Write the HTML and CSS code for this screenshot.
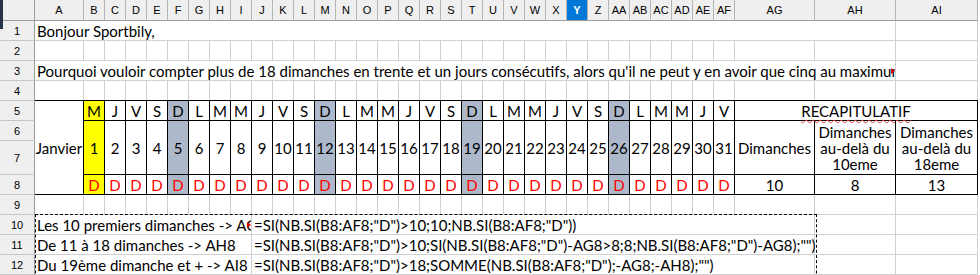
FILE: index.html
```html
<!DOCTYPE html>
<html lang="fr">
<head>
    <meta charset="UTF-8">
    <title>Dimanches - Janvier</title>
    <link rel="stylesheet" href="styles.css">
</head>
<body>

<div class="sheet">
    <!-- en-tetes de colonnes -->
    <div class="ch corner"></div>
    <div class="ch">A</div><div class="ch">B</div><div class="ch">C</div><div class="ch">D</div><div class="ch">E</div>
    <div class="ch">F</div><div class="ch">G</div><div class="ch">H</div><div class="ch">I</div><div class="ch">J</div>
    <div class="ch">K</div><div class="ch">L</div><div class="ch">M</div><div class="ch">N</div><div class="ch">O</div>
    <div class="ch">P</div><div class="ch">Q</div><div class="ch">R</div><div class="ch">S</div><div class="ch">T</div>
    <div class="ch">U</div><div class="ch">V</div><div class="ch">W</div><div class="ch">X</div><div class="ch sel">Y</div>
    <div class="ch">Z</div><div class="ch">AA</div><div class="ch">AB</div><div class="ch">AC</div><div class="ch">AD</div>
    <div class="ch">AE</div><div class="ch">AF</div><div class="ch">AG</div><div class="ch">AH</div><div class="ch">AI</div>

    <!-- ligne 1 -->
    <div class="rh">1</div>
    <div class="c wide">Bonjour <span class="typo">Sportbily</span>,</div>
    <div class="c"></div>

    <!-- ligne 2 -->
    <div class="rh">2</div>
    <div class="c"></div><div class="c"></div><div class="c"></div><div class="c"></div><div class="c"></div>
    <div class="c"></div><div class="c"></div><div class="c"></div><div class="c"></div><div class="c"></div>
    <div class="c"></div><div class="c"></div><div class="c"></div><div class="c"></div><div class="c"></div>
    <div class="c"></div><div class="c"></div><div class="c"></div><div class="c"></div><div class="c"></div>
    <div class="c"></div><div class="c"></div><div class="c"></div><div class="c"></div><div class="c"></div>
    <div class="c"></div><div class="c"></div><div class="c"></div><div class="c"></div><div class="c"></div>
    <div class="c"></div><div class="c"></div><div class="c"></div><div class="c"></div><div class="c"></div>

    <!-- ligne 3 -->
    <div class="rh">3</div>
    <div class="c wide cut">Pourquoi vouloir compter plus de 18 dimanches en trente et un jours consécutifs, alors qu'il ne peut y en avoir que cinq au maximum</div>
    <div class="c"></div>

    <!-- ligne 4 -->
    <div class="rh">4</div>
    <div class="c"></div><div class="c"></div><div class="c"></div><div class="c"></div><div class="c"></div>
    <div class="c"></div><div class="c"></div><div class="c"></div><div class="c"></div><div class="c"></div>
    <div class="c"></div><div class="c"></div><div class="c"></div><div class="c"></div><div class="c"></div>
    <div class="c"></div><div class="c"></div><div class="c"></div><div class="c"></div><div class="c"></div>
    <div class="c"></div><div class="c"></div><div class="c"></div><div class="c"></div><div class="c"></div>
    <div class="c"></div><div class="c"></div><div class="c"></div><div class="c"></div><div class="c"></div>
    <div class="c"></div><div class="c"></div><div class="c"></div><div class="c"></div><div class="c"></div>

    <!-- lignes 5 a 8 : le calendrier -->
    <div class="rh">5</div>
    <div class="rh">6</div>
    <div class="rh">7</div>
    <div class="rh">8</div>

    <div class="cal">
        <div class="k month">Janvier</div>

        <div class="k yel">M</div><div class="k">J</div><div class="k">V</div><div class="k">S</div><div class="k sun">D</div>
        <div class="k">L</div><div class="k">M</div><div class="k">M</div><div class="k">J</div><div class="k">V</div>
        <div class="k">S</div><div class="k sun">D</div><div class="k">L</div><div class="k">M</div><div class="k">M</div>
        <div class="k">J</div><div class="k">V</div><div class="k">S</div><div class="k sun">D</div><div class="k">L</div>
        <div class="k">M</div><div class="k">M</div><div class="k">J</div><div class="k">V</div><div class="k">S</div>
        <div class="k sun">D</div><div class="k">L</div><div class="k">M</div><div class="k">M</div><div class="k">J</div>
        <div class="k">V</div>
        <div class="k recap"><span class="typo">RECAPITULATIF</span></div>

        <div class="k num yel">1</div><div class="k num">2</div><div class="k num">3</div><div class="k num">4</div><div class="k num sun">5</div>
        <div class="k num">6</div><div class="k num">7</div><div class="k num">8</div><div class="k num">9</div><div class="k num">10</div>
        <div class="k num">11</div><div class="k num sun">12</div><div class="k num">13</div><div class="k num">14</div><div class="k num">15</div>
        <div class="k num">16</div><div class="k num">17</div><div class="k num">18</div><div class="k num sun">19</div><div class="k num">20</div>
        <div class="k num">21</div><div class="k num">22</div><div class="k num">23</div><div class="k num">24</div><div class="k num">25</div>
        <div class="k num sun">26</div><div class="k num">27</div><div class="k num">28</div><div class="k num">29</div><div class="k num">30</div>
        <div class="k num">31</div>
        <div class="k num">Dimanches</div>
        <div class="k num">Dimanches au-delà du 10eme</div>
        <div class="k num">Dimanches au-delà du 18eme</div>

        <div class="k red yel">D</div><div class="k red">D</div><div class="k red">D</div><div class="k red">D</div><div class="k red sun">D</div>
        <div class="k red">D</div><div class="k red">D</div><div class="k red">D</div><div class="k red">D</div><div class="k red">D</div>
        <div class="k red">D</div><div class="k red sun">D</div><div class="k red">D</div><div class="k red">D</div><div class="k red">D</div>
        <div class="k red">D</div><div class="k red">D</div><div class="k red">D</div><div class="k red sun">D</div><div class="k red">D</div>
        <div class="k red">D</div><div class="k red">D</div><div class="k red">D</div><div class="k red">D</div><div class="k red">D</div>
        <div class="k red sun">D</div><div class="k red">D</div><div class="k red">D</div><div class="k red">D</div><div class="k red">D</div>
        <div class="k red">D</div>
        <div class="k">10</div>
        <div class="k">8</div>
        <div class="k">13</div>
    </div>

    <!-- ligne 9 -->
    <div class="rh">9</div>
    <div class="c"></div><div class="c"></div><div class="c"></div><div class="c"></div><div class="c"></div>
    <div class="c"></div><div class="c"></div><div class="c"></div><div class="c"></div><div class="c"></div>
    <div class="c"></div><div class="c"></div><div class="c"></div><div class="c"></div><div class="c"></div>
    <div class="c"></div><div class="c"></div><div class="c"></div><div class="c"></div><div class="c"></div>
    <div class="c"></div><div class="c"></div><div class="c"></div><div class="c"></div><div class="c"></div>
    <div class="c"></div><div class="c"></div><div class="c"></div><div class="c"></div><div class="c"></div>
    <div class="c"></div><div class="c"></div><div class="c"></div><div class="c"></div><div class="c"></div>

    <!-- lignes 10 a 12 : les formules -->
    <div class="rh">10</div>
    <div class="c label cut">Les 10 premiers dimanches -&gt; AG8</div>
    <div class="c formula">=SI(NB.SI(B8:AF8;"D")&gt;10;10;NB.SI(B8:AF8;"D"))</div>
    <div class="c"></div><div class="c"></div>

    <div class="rh">11</div>
    <div class="c label">De 11 à 18 dimanches -&gt; AH8</div>
    <div class="c formula">=SI(NB.SI(B8:AF8;"D")&gt;10;SI(NB.SI(B8:AF8;"D")-AG8&gt;8;8;NB.SI(B8:AF8;"D")-AG8);"")</div>
    <div class="c"></div><div class="c"></div>

    <div class="rh">12</div>
    <div class="c label">Du 19ème dimanche et + -&gt; AI8</div>
    <div class="c formula">=SI(NB.SI(B8:AF8;"D")&gt;18;SOMME(NB.SI(B8:AF8;"D");-AG8;-AH8);"")</div>
    <div class="c"></div><div class="c"></div>

    <!-- zone copiee (pointilles) -->
    <div class="marquee"></div>
    <div class="edge"></div>
</div>

</body>
</html>
```

FILE: styles.css
```css
body {
    margin: 0;
    background-color: #fff;
    font-family: Lato, "Liberation Sans", Arial, sans-serif;
    color: #000;
    overflow: hidden;
}
.sheet {
    position: relative;
    width: 980px;
    height: 275px;
    display: grid;
    grid-template-columns: 35px 49px repeat(31, 21px) 80px 81px 82px;
    grid-template-rows: 21px repeat(6, 20px) 34px repeat(5, 20px);
}
.ch {
    background-color: #efefef;
    border-right: 1px solid #b4b4b4;
    border-bottom: 1px solid #9c9c9c;
    font-family: "Liberation Sans", Arial, sans-serif;
    font-size: 11px;
    line-height: 20px;
    text-align: center;
}
.ch.sel {
    background-color: #0078d7;
    color: #fff;
    font-weight: bold;
}
.corner {
    border-right-color: #9c9c9c;
}
.rh {
    background-color: #efefef;
    border-right: 1px solid #9c9c9c;
    border-bottom: 1px solid #c6c6c6;
    font-family: "Liberation Sans", Arial, sans-serif;
    font-size: 11px;
    display: flex;
    align-items: center;
    justify-content: center;
}
.c {
    border-right: 1px solid #d0d0d0;
    border-bottom: 1px solid #d0d0d0;
    font-size: 15px;
    line-height: 20px;
    padding-left: 2px;
    white-space: nowrap;
    overflow: hidden;
}
.wide {
    grid-column: span 34;
}
.label {
    grid-column: span 9;
}
.formula {
    grid-column: span 24;
    overflow: visible;
}
.cut {
    position: relative;
}
.cut::after {
    content: "";
    position: absolute;
    right: 0;
    top: 7px;
    width: 4px;
    height: 6px;
    background-color: #fff;
    border-left: 4px solid #e00000;
    border-top: 3px solid transparent;
    border-bottom: 3px solid transparent;
    background-clip: content-box;
    box-sizing: border-box;
}
.typo {
    text-decoration: underline wavy #e53935;
    text-decoration-thickness: 1px;
    text-decoration-skip-ink: none;
    text-underline-offset: 2px;
}
.cal {
    grid-column: 2 / -1;
    grid-row: 6 / 10;
    margin-top: -1px;
    border-top: 1px solid #000;
    display: grid;
    grid-template-columns: 49px repeat(31, 21px) 80px 81px 82px;
    grid-template-rows: 20px 20px 34px 20px;
    background-color: #fff;
}
.k {
    border-right: 1px solid #000;
    border-bottom: 1px solid #000;
    font-size: 15px;
    line-height: 16px;
    display: flex;
    align-items: center;
    justify-content: center;
    text-align: center;
}
.month {
    grid-row: span 4;
}
.recap {
    grid-column: span 3;
}
.num {
    grid-row: span 2;
}
.yel {
    background-color: #ffff00;
}
.sun {
    background-color: #adb9ca;
}
.red {
    color: #ff0000;
}
.marquee {
    position: absolute;
    left: 35px;
    top: 214px;
    width: 782px;
    height: 80px;
    border: 1px dashed #000;
    box-sizing: border-box;
}
.edge {
    position: absolute;
    left: 0;
    top: 0;
    width: 3px;
    height: 29px;
    background-color: #26334a;
}
```
